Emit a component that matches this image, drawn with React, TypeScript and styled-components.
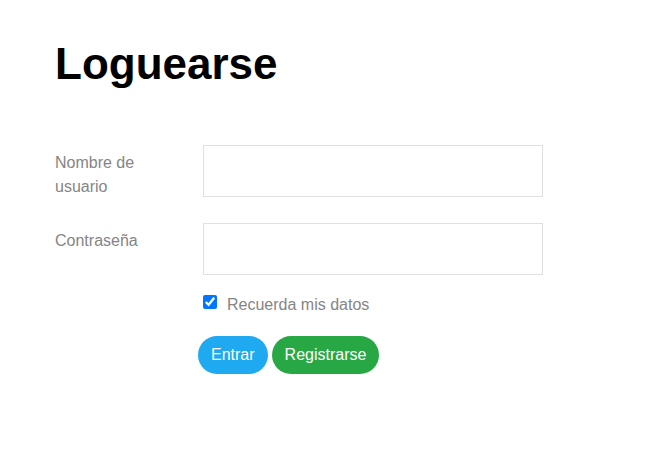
import React from 'react';
import styled, { createGlobalStyle } from 'styled-components';

const Global = createGlobalStyle`
  body {
    margin: 0;
    background: #fff;
    font-family: "Liberation Sans", Arial, sans-serif;
  }
`

const Page = styled.div`
  padding: 39px 55px 0;
`

const Title = styled.h1`
  margin: 0;
  font-size: 44px;
  font-weight: bold;
  color: #000;
  line-height: normal;
`

const Form = styled.form`
  margin-top: 56px;
  display: grid;
  grid-template-columns: 148px 340px;
  row-gap: 25px;
`

const Label = styled.label`
  padding-top: 6px;
  margin-bottom: -1px;
  font-size: 16px;
  line-height: 24px;
  color: #858585;
  width: 120px;
`

const Input = styled.input`
  box-sizing: border-box;
  height: 52px;
  width: 340px;
  border: 1px solid #e0e0e0;
  margin: 0;
  padding: 0 12px;
  font-size: 16px;
  outline: none;
`

const CheckRow = styled.label`
  grid-column: 2;
  margin-top: -7px;
  display: flex;
  align-items: flex-start;
  gap: 10px;
  font-size: 16px;
  line-height: 24px;
  color: #858585;

  input {
    margin: 2px 0 0;
    width: 14px;
    height: 14px;
  }
`

const Actions = styled.div`
  grid-column: 2;
  margin-top: -6px;
  margin-left: -5px;
  display: flex;
  gap: 4px;
`

interface ButtonProps {
  $variant: 'primary' | 'success'
}

const Button = styled.button<ButtonProps>`
  height: 38px;
  padding: 0 13px;
  border: none;
  border-radius: 19px;
  font-family: inherit;
  font-size: 16px;
  color: #fff;
  background: ${p => p.$variant === 'primary' ? '#1ea9f0' : '#28a745'};
  cursor: pointer;
`

export default function App() {
  return <Page>
    <Global />
    <Title>Loguearse</Title>
    <Form onSubmit={e => e.preventDefault()}>
      <Label htmlFor="user">Nombre de usuario</Label>
      <Input id="user" type="text" />
      <Label htmlFor="pass">Contraseña</Label>
      <Input id="pass" type="password" />
      <CheckRow>
        <input type="checkbox" defaultChecked />
        Recuerda mis datos
      </CheckRow>
      <Actions>
        <Button $variant="primary" type="submit">Entrar</Button>
        <Button $variant="success" type="button">Registrarse</Button>
      </Actions>
    </Form>
  </Page>;
}
